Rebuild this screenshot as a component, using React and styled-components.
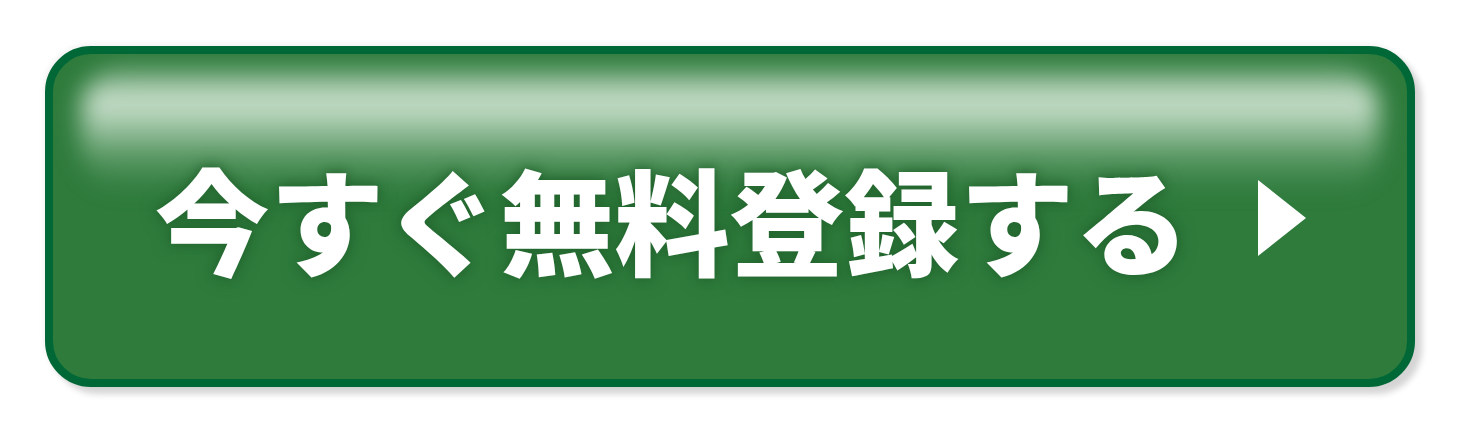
import React from "react";
import styled, { createGlobalStyle } from "styled-components";

const GlobalStyle = createGlobalStyle`
  html, body {
    margin: 0;
    padding: 0;
    background: #ffffff;
  }
`;

const Page = styled.div`
  width: 1460px;
  height: 432px;
  box-sizing: border-box;
  padding: 46px 0 0 45px;
`;

const Button = styled.a`
  position: relative;
  display: flex;
  align-items: center;
  justify-content: center;
  gap: 68px;
  width: 1370px;
  height: 341px;
  box-sizing: border-box;
  border: 8px solid #006837;
  border-radius: 46px;
  background: #2e7b3c;
  overflow: hidden;
  box-shadow: 7px 7px 6px rgba(0, 0, 0, 0.17), -2px -2px 5px rgba(0, 0, 0, 0.05);
  text-decoration: none;
  cursor: pointer;

  &::before {
    content: "";
    position: absolute;
    top: 12px;
    left: 28px;
    right: 28px;
    height: 125px;
    border-radius: 44px;
    background: linear-gradient(
      to bottom,
      rgba(205, 226, 207, 0.2) 0%,
      rgba(210, 229, 212, 1) 26%,
      rgba(185, 214, 189, 0.8) 48%,
      rgba(140, 186, 146, 0.45) 72%,
      rgba(46, 123, 60, 0) 100%
    );
    filter: blur(12px);
  }
`;

const Label = styled.span`
  position: relative;
  font-family: "Noto Sans CJK JP", "Noto Sans", sans-serif;
  font-weight: 900;
  font-size: 115px;
  line-height: 1;
  color: #ffffff;
  white-space: nowrap;
  margin-top: 2px;
  text-shadow: 0 0 10px rgba(34, 100, 46, 0.9), 0 0 18px rgba(34, 100, 46, 0.7);
`;

const Arrow = styled.svg`
  position: relative;
  width: 48px;
  height: 76px;
  margin-top: 2px;
  flex-shrink: 0;
`;

export default function App() {
  return (
    <>
      <GlobalStyle />
      <Page>
        <Button>
          <Label>今すぐ無料登録する</Label>
          <Arrow viewBox="0 0 48 76">
            <polygon points="0,0 48,38 0,76" fill="#ffffff" />
          </Arrow>
        </Button>
      </Page>
    </>
  );
}
